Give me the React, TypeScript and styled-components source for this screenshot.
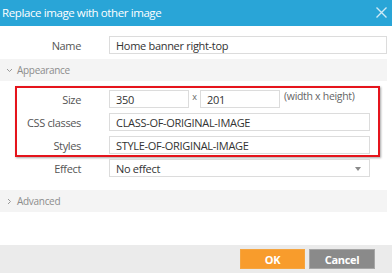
import React from "react";
import styled, { createGlobalStyle } from "styled-components";

const Global = createGlobalStyle`
  html, body { margin: 0; padding: 0; background: #ffffff; }
  body { font-family: "Open Sans", "Noto Sans", sans-serif; }
  * { box-sizing: border-box; }
`;

const Dialog = styled.div`
  width: 392px;
  height: 273px;
  display: flex;
  flex-direction: column;
  background: #fff;
  overflow: hidden;
`;

const Header = styled.div`
  height: 26px;
  flex: none;
  background: #29a5d7;
  color: #fff;
  display: flex;
  align-items: center;
  justify-content: space-between;
  padding: 0 5px 2px 2px;
  font-size: 11.5px;
  letter-spacing: -0.4px;
`;

const Close = styled.svg`
  width: 11px;
  height: 11px;
  margin-top: 1px;
`;

const Body = styled.div`
  flex: 1;
  display: flex;
  flex-direction: column;
  padding-top: 10px;
`;

const Row = styled.div<{ $label: number; $right: number }>`
  display: grid;
  grid-template-columns: ${(p) => p.$label}px 1fr;
  column-gap: 28px;
  align-items: center;
  height: 18px;
  padding-right: ${(p) => p.$right}px;
`;

const Label = styled.span`
  text-align: right;
  font-size: 11px;
  letter-spacing: -0.35px;
  color: #555;
  white-space: nowrap;
`;

const Field = styled.div<{ $w?: number }>`
  height: 18px;
  ${(p) => (p.$w ? `width: ${p.$w}px;` : "")}
  border: 1px solid #dcdcdc;
  background: #fff;
  display: flex;
  align-items: center;
  padding-left: 6px;
  font-size: 11px;
  letter-spacing: -0.3px;
  color: #333;
  white-space: nowrap;
  overflow: hidden;
  position: relative;
`;

const Arrow = styled.span`
  position: absolute;
  right: 8px;
  top: 7px;
  width: 0;
  height: 0;
  border-left: 3.5px solid transparent;
  border-right: 3.5px solid transparent;
  border-top: 4px solid #8a8a8a;
`;

const SizeGroup = styled.div`
  display: flex;
  align-items: center;
`;

const Times = styled.span`
  width: 11px;
  text-align: center;
  font-size: 9px;
  color: #666;
  align-self: flex-start;
`;

const Hint = styled.span`
  margin-left: 4px;
  font-size: 10.5px;
  letter-spacing: -0.3px;
  color: #666;
  align-self: flex-start;
  margin-top: -1px;
`;

const Section = styled.div<{ $top: number }>`
  height: 22px;
  margin-top: ${(p) => p.$top}px;
  margin-right: 5px;
  background: #f4f4f4;
  display: flex;
  align-items: center;
  padding-left: 6px;
  font-size: 10px;
  letter-spacing: -0.3px;
  color: #8c8c8c;
  gap: 4px;
`;

const Chevron = styled.svg`
  width: 7px;
  height: 7px;
`;

const Highlight = styled.div`
  margin: 5px 12px 0 15px;
  border: 2px solid #e5141c;
  box-shadow: 1px 1px 2px rgba(0, 0, 0, 0.35);
  padding: 2px 8px 1px 0;
  display: flex;
  flex-direction: column;
  gap: 5px;
`;

const Footer = styled.div`
  margin-top: auto;
  height: 28px;
  background: #ebebeb;
  display: flex;
  justify-content: flex-end;
  align-items: flex-start;
  gap: 4px;
  padding: 4px 17px 0 0;
`;

const Button = styled.button<{ $tone: "ok" | "cancel" }>`
  width: ${(p) => (p.$tone === "ok" ? 65 : 66)}px;
  height: 20px;
  border: 1px solid ${(p) => (p.$tone === "ok" ? "#f5a540" : "#a6a6a6")};
  background: ${(p) => (p.$tone === "ok" ? "#f89c2c" : "#8a8a8a")};
  color: #fff;
  font-family: "Open Sans", sans-serif;
  font-weight: 700;
  font-size: 11px;
  padding: 0;
  letter-spacing: -0.3px;
`;

export default function App() {
  return (
    <Dialog>
      <Global />
      <Header>
        <span>Replace image with other image</span>
        <Close viewBox="0 0 11 11">
          <path d="M0.5 0.5 L10.5 10.5 M10.5 0.5 L0.5 10.5" stroke="#cfeaf6" strokeWidth="1.4" />
        </Close>
      </Header>
      <Body>
        <Row $label={81} $right={5}>
          <Label>Name</Label>
          <Field>Home banner right-top</Field>
        </Row>
        <Section $top={5}>
          <Chevron viewBox="0 0 7 7">
            <path d="M1 2 L3.5 4.5 L6 2" fill="none" stroke="#999" strokeWidth="1" />
          </Chevron>
          Appearance
        </Section>
        <Highlight>
          <Row $label={64} $right={0}>
            <Label>Size</Label>
            <SizeGroup>
              <Field $w={80}>350</Field>
              <Times>x</Times>
              <Field $w={80}>201</Field>
              <Hint>(width x height)</Hint>
            </SizeGroup>
          </Row>
          <Row $label={64} $right={0}>
            <Label>CSS classes</Label>
            <Field>CLASS-OF-ORIGINAL-IMAGE</Field>
          </Row>
          <Row $label={64} $right={0}>
            <Label>Styles</Label>
            <Field>STYLE-OF-ORIGINAL-IMAGE</Field>
          </Row>
        </Highlight>
        <Row $label={81} $right={22} style={{ marginTop: 2 }}>
          <Label>Effect</Label>
          <Field>
            No effect
            <Arrow />
          </Field>
        </Row>
        <Section $top={13}>
          <Chevron viewBox="0 0 7 7">
            <path d="M2 1 L4.5 3.5 L2 6" fill="none" stroke="#999" strokeWidth="1" />
          </Chevron>
          Advanced
        </Section>
        <Footer>
          <Button $tone="ok">OK</Button>
          <Button $tone="cancel">Cancel</Button>
        </Footer>
      </Body>
    </Dialog>
  );
}
